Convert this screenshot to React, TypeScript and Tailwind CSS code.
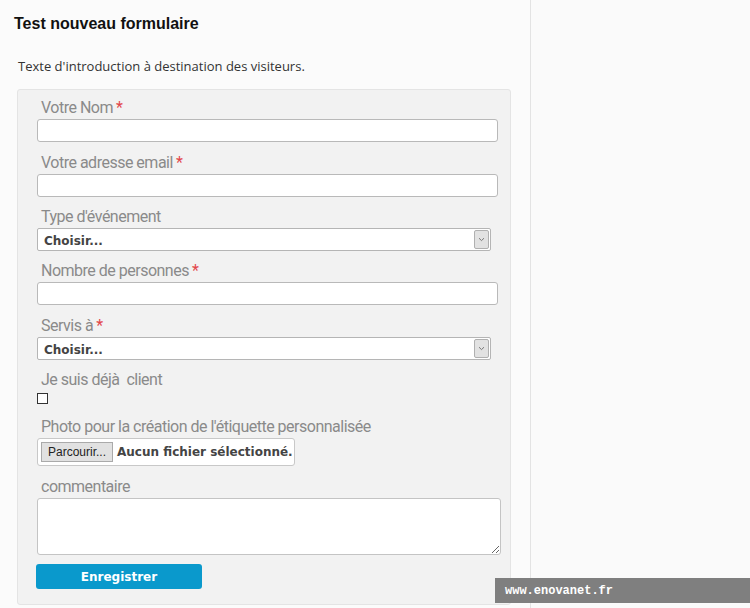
import React from "react";

const labelFont = { fontFamily: "Roboto, 'Noto Sans', sans-serif" };

function Label({ text, required }: { text: string; required?: boolean }) {
  return (
    <div className="h-[22px] pl-1 text-[16px] leading-[22px] tracking-[-0.5px] text-[#8a8a8a]">
      {text}
      {required && <span className="ml-[3px] text-[#e2474b]">*</span>}
    </div>
  );
}

function TextInput() {
  return (
    <input
      type="text"
      className="block h-[23px] w-[461px] rounded-[3px] border border-[#b9b9b9] bg-white outline-none"
    />
  );
}

function FakeSelect() {
  return (
    <div className="flex h-[23px] w-[454px] items-stretch rounded-[2px] border border-[#b5b5b5] bg-white">
      <div className="flex flex-1 items-center pl-[6px] pt-[2px] font-['DejaVu_Sans',sans-serif] text-[12px] font-bold text-[#444]">
        Choisir...
      </div>
      <div className="my-[1px] mr-[1px] flex w-[15px] items-center justify-center rounded-[2px] border border-[#b0b0b0] bg-[#e2e2e2]">
        <svg width="7" height="5" viewBox="0 0 7 5">
          <path d="M1 1.2 L3.5 3.6 L6 1.2" fill="none" stroke="#777" strokeWidth="1" />
        </svg>
      </div>
    </div>
  );
}

export default function App() {
  return (
    <div className="relative flex h-[608px] w-[750px] overflow-hidden bg-[#fbfbfb] font-['Liberation_Sans',Arial,sans-serif]">
      {/* colonne principale */}
      <div className="w-[531px] shrink-0 border-r border-[#e3e3e3]">
        <h1 className="ml-[14px] mt-[14px] text-[16px] font-bold leading-[20px] text-[#111]">
          Test nouveau formulaire
        </h1>
        <p
          className="ml-[18px] mt-[24px] text-[13px] leading-[16px] text-[#333]"
          style={{ fontFamily: "'Open Sans', sans-serif" }}
        >
          Texte d'introduction à destination des visiteurs.
        </p>

        <div
          className="ml-[17px] mt-[15px] w-[494px] rounded-[3px] border border-[#e4e4e4] bg-[#f2f2f2] pb-[15px] pl-[19px] pt-[7px]"
          style={labelFont}
        >
          <Label text="Votre Nom" required />
          <TextInput />

          <div className="mt-[10px]" />
          <Label text="Votre adresse email" required />
          <TextInput />

          <div className="mt-[9px]" />
          <Label text="Type d'événement" />
          <FakeSelect />

          <div className="mt-[9px]" />
          <Label text="Nombre de personnes" required />
          <TextInput />

          <div className="mt-[10px]" />
          <Label text="Servis à" required />
          <FakeSelect />

          <div className="mt-[9px]" />
          <Label text={"Je suis déjà\u00a0 client"} />
          <div className="mt-[2px] h-[11px] w-[11px] border border-[#333] bg-white" />

          <div className="mt-[12px]" />
          <Label text="Photo pour la création de l'étiquette personnalisée" />
          <div className="flex h-[28px] w-[258px] items-center overflow-hidden whitespace-nowrap rounded-[3px] border border-[#c8c8c8] bg-white pl-[3px]">
            <div className="flex h-[20px] shrink-0 items-center border border-[#aaa] bg-[#e1e1e1] px-[6px] font-['Liberation_Sans',Arial,sans-serif] text-[12px] text-[#222]">
              Parcourir...
            </div>
            <span className="ml-[4px] shrink-0 font-['DejaVu_Sans',sans-serif] text-[12px] font-bold text-[#444]">
              Aucun fichier sélectionné.
            </span>
          </div>

          <div className="mt-[10px]" />
          <Label text="commentaire" />
          <textarea className="block h-[57px] w-[464px] rounded-[3px] border border-[#c4c4c4] bg-white outline-none" />

          <button
            type="button"
            className="-ml-[1px] mt-[9px] h-[25px] w-[166px] rounded-[3px] bg-[#0a99cc] font-['DejaVu_Sans',sans-serif] text-[12px] font-bold text-white"
          >
            Enregistrer
          </button>
        </div>
      </div>

      <div className="flex-1 bg-[#fafafa]" />

      {/* bandeau du site */}
      <div className="absolute left-[495px] top-[578px] flex h-[25px] w-[255px] items-center bg-[#7f7f7f] pl-[10px] font-['Liberation_Mono',monospace] text-[12px] font-bold text-white">
        www.enovanet.fr
      </div>
    </div>
  );
}
